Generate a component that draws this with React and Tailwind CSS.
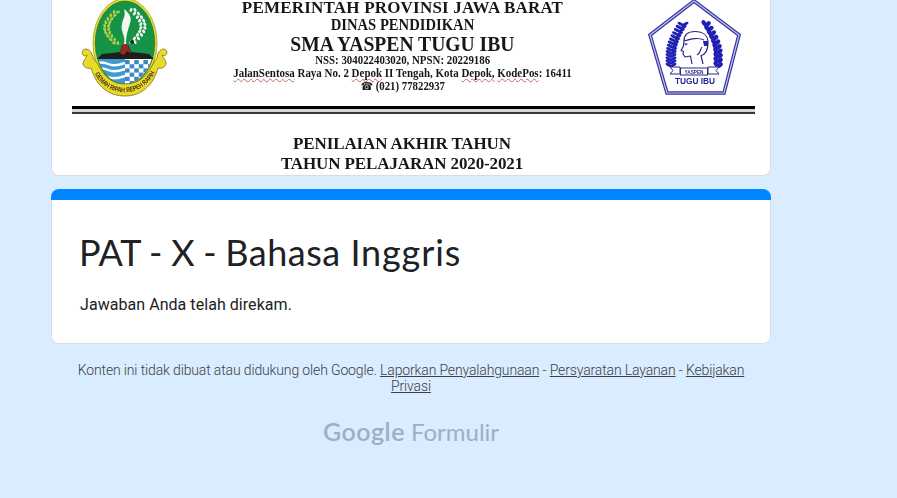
import React from 'react';

const SPELL = 'underline decoration-wavy decoration-[#d0605c] decoration-[0.5px] underline-offset-[1px] [text-decoration-skip-ink:none]';

function Leaves({ points, fill, rx, ry }) {
  return points.map(([x, y, r], i) => (
    <ellipse key={i} cx={x} cy={y} rx={rx} ry={ry} fill={fill} transform={`rotate(${r} ${x} ${y})`} />
  ));
}

function ProvinceLogo() {
  const rice = [];
  for (let i = 0; i < 10; i++) {
    const t = i / 9;
    const x = 66 - 9.5 * Math.sin(Math.PI * t);
    const y = 12 + t * 31;
    const turn = 40 - 80 * t;
    rice.push([x - 2, y, turn - 30], [x + 2, y, turn + 30]);
  }
  const cotton = [];
  for (let i = 0; i < 10; i++) {
    const t = i / 9;
    const x = 83 + 10 * Math.sin(Math.PI * t);
    const y = 10 + t * 32;
    cotton.push([x - 2, y, 35], [x + 2, y, -35]);
  }
  const checks = [];
  for (let r = 0; r < 6; r++)
    for (let c = 0; c < 6; c++) if ((r + c) % 2 === 0) checks.push([75 + c * 4.6, 60 + r * 4.2]);
  return (
    <svg width="90" height="100" viewBox="30 0 90 100" className="block blur-[0.3px]">
      <defs>
        <clipPath id="shield">
          <ellipse cx="75" cy="43" rx="29" ry="41" />
        </clipPath>
        <path id="motto" d="M43 68 C55 98 95 98 107 66" />
      </defs>
      <ellipse cx="75" cy="43" rx="32" ry="44.500" fill="#e8df25" stroke="#8b9330" strokeWidth="0.700" />
      <ellipse cx="75" cy="43" rx="29.800" ry="42" fill="#159447" stroke="#35612d" strokeWidth="0.600" />
      <g clipPath="url(#shield)">
        <rect x="44" y="59" width="31" height="28" fill="#3d9bd3" />
        <rect x="75" y="59" width="31" height="28" fill="#fff" />
        {checks.map(([x, y], i) => (
          <rect key={i} x={x} y={y} width="4.600" height="4.200" fill="#3d86c8" />
        ))}
        <path d="M44 64q8-3 14 0t17-1M44 70q8-3 14 0t17-1M44 77q8-3 14 0t17-1" fill="none" stroke="#fff" strokeWidth="2.400" />
      </g>
      <path d="M47 59l5-5 10-1 8-1 2-7h6l3 7 10 1 8 1 5 5z" fill="#211d1b" />
      <path d="M70 53l3-9h4l4 10-4-3-3 4z" fill="#982820" />
      <path d="M74 44c2-8-4-13-2-20 1-6 4-8 2-15 6 5 8 9 6 14-1 5-4 10-4 21z" fill="#f5f7ef" />
      <Leaves points={rice} fill="#b5cc4c" rx="1.300" ry="2.100" />
      <Leaves points={cotton} fill="#eef5ec" rx="1.400" ry="2" />
      <circle cx="82" cy="42" r="2" fill="#222" />
      <path
        d="M36 49c-3 0-5 3-3 6 2 2 4 0 4 0-1 4-4 5-4 9 1 4 6 5 8 4 6 19 18 28 34 28s28-10 33-28c4 1 8-1 8-5 0-3-3-5-4-8 1 1 4 1 5-2 0-4-4-5-6-3-5 3-2 8-7 12-7 15-16 22-29 22S54 77 47 63c-5-4-4-13-11-14z"
        fill="#ead927"
        stroke="#77701f"
        strokeWidth="0.800"
      />
      <text fontFamily="Liberation Sans, sans-serif" fontWeight="700" fontSize="6.800" fill="#3c3612" transform="translate(0 2)">
        <textPath href="#motto" startOffset="4" textLength="75" lengthAdjust="spacingAndGlyphs">
          GEMAH RIPAH REPEH RAPIH
        </textPath>
      </text>
    </svg>
  );
}

function SchoolLogo() {
  const left = [];
  const right = [];
  for (let i = 0; i < 14; i++) {
    const t = i / 13;
    const x = 683 - 12 * Math.sin((Math.PI / 2) * Math.min(1, t * 1.3));
    const y = 24 + t * 41;
    left.push([x - 2.3, y, -60], [x + 2.3, y, 60]);
  }
  for (let i = 0; i < 10; i++) {
    const t = i / 9;
    const x = 706 + 12 * Math.sin((Math.PI / 2) * Math.min(1, t * 1.3));
    const y = 23 + t * 41;
    right.push([x - 2, y, -30], [x + 2, y + 1, 45]);
  }
  return (
    <svg width="96" height="100" viewBox="646 0 96 100" className="block blur-[0.3px]">
      <path d="M694 1L739 35 724 93H667L650 35z" fill="#fff" stroke="#3434a0" strokeWidth="3.600" />
      <path d="M694 1L739 35 724 93H667L650 35z" fill="none" stroke="#c4c4ee" strokeWidth="1.200" />
      <Leaves points={left} fill="#2020b4" rx="1.500" ry="3.500" />
      <Leaves points={right} fill="#2020b4" rx="2.200" ry="3.200" />
      <g fill="none" stroke="#292985" strokeWidth="1.200" strokeLinejoin="round">
        <path d="M684 41c0-6 4-9.500 11-9.500 8 0 13 4 13 11 0 8-3 12-7 13l2 8.500" />
        <path d="M684 41l-.5 5-2.500 4.500 2.500 1-.5 2.500 2 3 5.500-1 1.500 8" />
        <path d="M684 41c7-2 14-4 20-1M697 55c3-1 3-5 5-8" />
      </g>
      <path d="M703 41h5v5h-4zM684 43.500h4l-2 2z" fill="#2020b4" />
      <path d="M670 67h10v7h-10l3-3.500zM719 67h-11v7h11l-3-3.500z" fill="#fff" stroke="#292985" strokeWidth="1" />
      <rect x="680.500" y="68" width="27" height="7" fill="#fff" stroke="#292985" />
      <text x="684.500" y="73.800" textLength="19" lengthAdjust="spacingAndGlyphs" fontSize="6" fontFamily="Liberation Sans, sans-serif" fill="#292985">
        YASPEN
      </text>
      <text x="675" y="83.500" textLength="40" lengthAdjust="spacingAndGlyphs" fontSize="9" fontWeight="700" fontFamily="Liberation Sans, sans-serif" fill="#25259a">
        TUGU IBU
      </text>
    </svg>
  );
}

function Banner() {
  return (
    <header className="h-[176px] overflow-hidden rounded-b-lg border border-t-0 border-[#dadce0] bg-white font-['Liberation_Serif',serif] font-bold text-[#171717]">
      <div className="flex h-[105px] justify-between px-[28px]">
        <ProvinceLogo />
        <div className="mr-[11px] flex w-[350px] flex-col items-center whitespace-nowrap blur-[0.3px]">
          <div className="h-[15px] text-[17px] leading-[15px] tracking-[0.2px]">PEMERINTAH PROVINSI JAWA BARAT</div>
          <div className="h-[19px] scale-x-[0.915] text-[16px] leading-[20px]">DINAS PENDIDIKAN</div>
          <div className="h-[21px] scale-x-[0.98] text-[20px] leading-[21px]">SMA YASPEN TUGU IBU</div>
          <div className="h-[11px] scale-x-[0.905] text-[12px] leading-[11px]">NSS: 304022403020, NPSN: 20229186</div>
          <div className="h-[14px] scale-x-[0.912] text-[12px] leading-[14px]">
            <span className={SPELL}>JalanSentosa</span> Raya No. 2 <span className={SPELL}>Depok</span> II Tengah, Kota{' '}
            <span className={SPELL}>Depok,</span> <span className={SPELL}>KodePos</span>: 16411
          </div>
          <div className="h-[12px] scale-x-[0.9] text-[12px] leading-[12px]">
            <span className="font-['DejaVu_Sans',sans-serif] text-[11px]">☎</span> (021) 77822937
          </div>
        </div>
        <SchoolLogo />
      </div>
      <div className="mr-[15px] ml-[20px] mt-px h-[8px] border-t-[3px] border-b-2 border-t-black border-b-[#3a3638] bg-[#d8d4d8] bg-clip-padding" />
      <div className="mt-[20px] mr-[18px] flex flex-col items-center text-[17px] leading-5 tracking-[-0.12px] whitespace-nowrap blur-[0.2px]">
        <div>PENILAIAN AKHIR TAHUN</div>
        <div>TAHUN PELAJARAN 2020-2021</div>
      </div>
    </header>
  );
}

export default function App() {
  return (
    <div className="h-[498px] overflow-hidden bg-[#daecff] pl-[51px] font-[Roboto,sans-serif]">
      <main className="w-[720px]">
        <Banner />
        <section className="mt-[13px] h-[155px] overflow-hidden rounded-lg bg-white">
          <div className="h-[11px] bg-[#0087ff]" />
          <div className="h-[144px] rounded-b-lg border border-t-0 border-[#dadce0] px-[28px] pt-[28px]">
            <h1 className="-ml-px font-[Lato,sans-serif] text-[36px] leading-[48px] whitespace-nowrap text-[#202124]">
              <span className="tracking-[-0.25px]">PAT - X - </span>
              <span className="tracking-[0.5px]">Bahasa </span>
              <span className="tracking-[0.9px]">Inggris</span>
            </h1>
            <p className="mt-[17px] text-[16px] leading-6 tracking-[0.05px] text-[#202124]">Jawaban Anda telah direkam.</p>
          </div>
        </section>
        <footer className="text-center">
          <p className="mt-[18px] px-6 text-[14px] leading-4 font-light tracking-[-0.14px] text-[#3c4043]">
            Konten ini tidak dibuat atau didukung oleh Google. <a className="underline">Laporkan Penyalahgunaan</a> -{' '}
            <a className="underline">Persyaratan Layanan</a> - <a className="underline">Kebijakan Privasi</a>
          </p>
          <div className="mt-[21px] flex items-baseline justify-center gap-[6px] font-[Lato,sans-serif] text-[24px] leading-8 text-[#9fb0bd]">
            <span className="text-[25px] font-semibold tracking-[0.5px]">Google</span>
            <span>Formulir</span>
          </div>
        </footer>
      </main>
    </div>
  );
}
